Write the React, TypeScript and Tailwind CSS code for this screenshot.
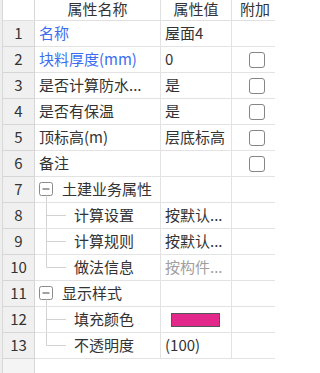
type Row = {
  name: string;
  value?: string;
  blue?: boolean;
  dim?: boolean;
  check?: boolean;
  tree?: 'group' | 'child' | 'last';
  swatch?: boolean;
};

const rows: Row[] = [
  { name: '名称', value: '屋面4', blue: true },
  { name: '块料厚度(mm)', value: '0', blue: true, check: true },
  { name: '是否计算防水...', value: '是', check: true },
  { name: '是否有保温', value: '是', check: true },
  { name: '顶标高(m)', value: '层底标高', check: true },
  { name: '备注', value: '', check: true },
  { name: '土建业务属性', tree: 'group' },
  { name: '计算设置', value: '按默认...', tree: 'child' },
  { name: '计算规则', value: '按默认...', tree: 'child' },
  { name: '做法信息', value: '按构件...', dim: true, tree: 'last' },
  { name: '显示样式', tree: 'group' },
  { name: '填充颜色', swatch: true, tree: 'child' },
  { name: '不透明度', value: '(100)', tree: 'last' },
];

function TreeMark({ kind }: { kind: 'group' | 'child' | 'last' }) {
  if (kind === 'group') {
    return (
      <svg width="27" height="25" className="shrink-0">
        <rect x="4.5" y="5.5" width="13" height="13" rx="2" fill="#fff" stroke="#8a8a8a" />
        <line x1="7.5" y1="12" x2="14.5" y2="12" stroke="#444" />
        <line x1="11.5" y1="18.5" x2="11.5" y2="25" stroke="#d2d2d2" />
      </svg>
    );
  }
  return (
    <svg width="39" height="25" className="shrink-0">
      <line x1="11.5" y1="0" x2="11.5" y2={kind === 'last' ? 12.5 : 25} stroke="#d2d2d2" />
      <line x1="11.5" y1="12.5" x2="31" y2="12.5" stroke="#d2d2d2" />
    </svg>
  );
}

function Checkbox() {
  return <div className="w-[16px] h-[16px] rounded-[3px] border border-[#858585] bg-white" />;
}

export default function App() {
  return (
    <div
      className="w-[275px] h-[373px] overflow-hidden bg-white flex text-[15px] text-[#333]"
      style={{ fontFamily: '"Noto Sans CJK SC", "Noto Sans", sans-serif' }}
    >
      {/* left edge strip */}
      <div className="w-[3px] shrink-0 bg-[#eeeeee] border-r border-[#d8d8d8]" />

      <div className="flex flex-col w-[272px] shrink-0">
        {/* header */}
        <div className="flex h-[21px] border-b border-[#e0e0e0]">
          <div className="w-[32px] border-r border-[#d8d8d8]" />
          <div className="w-[126px] border-r border-[#e0e0e0] text-center leading-[17px]">属性名称</div>
          <div className="w-[71px] border-r border-[#e0e0e0] text-center leading-[17px]">属性值</div>
          <div className="w-[43px] pl-[8px] leading-[17px] whitespace-nowrap">附加</div>
        </div>

        {rows.map((r, i) => (
          <div key={i} className="flex h-[26px]">
            <div className="w-[32px] bg-[#f0f0f0] border-r border-b border-[#d6d6d6] flex items-center justify-center">
              {i + 1}
            </div>
            <div className="w-[126px] border-r border-b border-[#e3e3e3] flex items-center overflow-hidden whitespace-nowrap">
              {r.tree ? <TreeMark kind={r.tree} /> : <div className="w-[4px] shrink-0" />}
              <span className={r.blue ? 'text-[#3c6df0]' : ''}>{r.name}</span>
            </div>
            <div className="w-[71px] border-r border-b border-[#e3e3e3] flex items-center pl-1 overflow-hidden whitespace-nowrap">
              {r.swatch ? (
                <div className="ml-[6px] w-[49px] h-[14px] bg-[#e2288a] border border-[#555]" />
              ) : (
                <span className={r.dim ? 'text-[#a0a0a0]' : ''}>{r.value}</span>
              )}
            </div>
            <div className="w-[43px] border-b border-[#e3e3e3] flex items-center pl-[17px]">
              {r.check && <Checkbox />}
            </div>
          </div>
        ))}

        {/* empty area below rows */}
        <div className="flex flex-1">
          <div className="w-[32px] bg-[#f4f4f4] border-r border-[#d6d6d6]" />
          <div className="flex-1" />
        </div>
      </div>
    </div>
  );
}
